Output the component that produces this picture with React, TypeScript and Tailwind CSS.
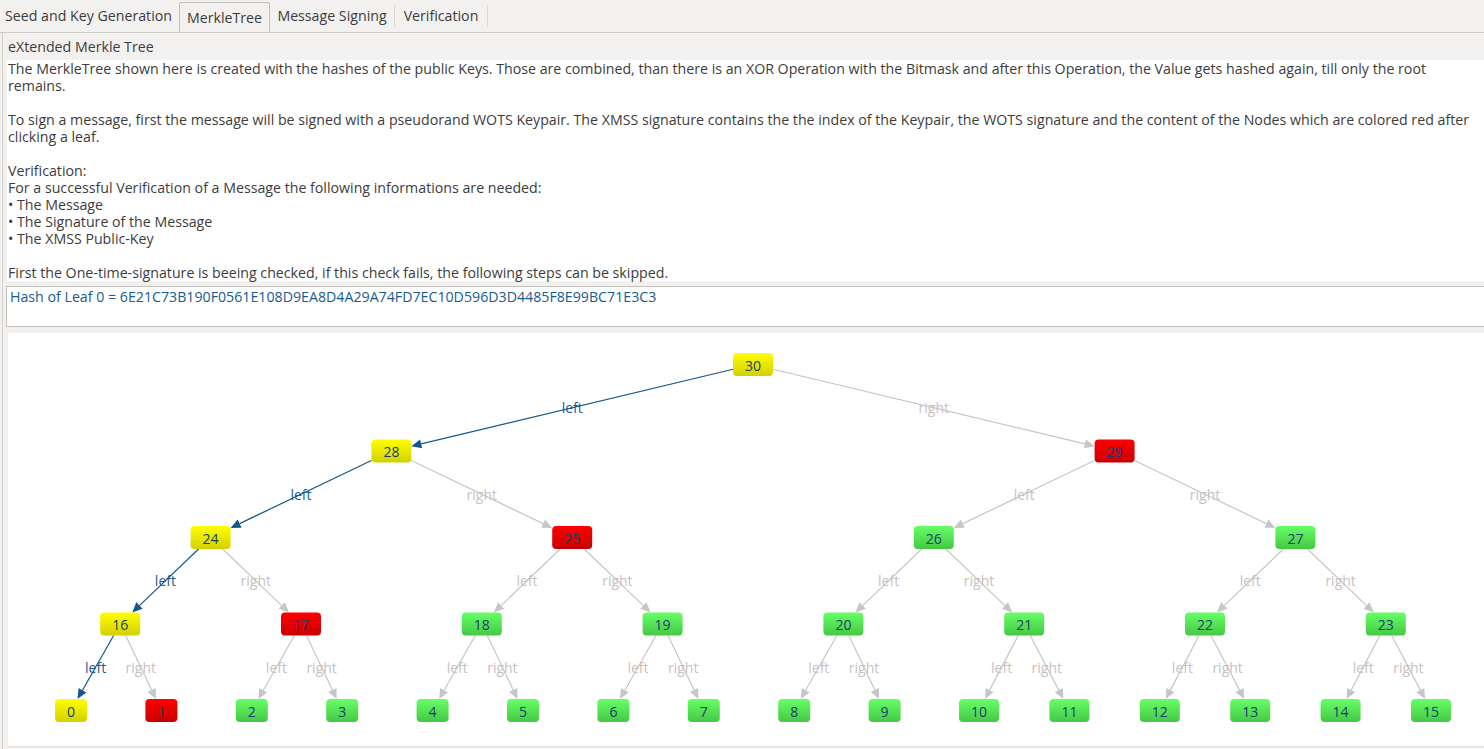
import React from "react";

const FONT = '"Open Sans", "Noto Sans", sans-serif';

type Col = "y" | "r" | "g";
type Node = { id: number; left: number; top: number; w: number; h: number; color: Col };

const S = 90.4;
const TOPS = [353, 439.5, 526, 612.5, 699];
const H = 23;

const yellow = new Set([30, 28, 24, 16, 0]);
const red = new Set([29, 25, 17, 1]);
const colorOf = (id: number): Col => (yellow.has(id) ? "y" : red.has(id) ? "r" : "g");

const levels: number[][] = [[30], [28, 29], [24, 25, 26, 27], [16, 17, 18, 19, 20, 21, 22, 23], Array.from({ length: 16 }, (_, i) => i)];

const nodes: Record<number, Node> = {};
levels.forEach((ids, L) => {
  const span = Math.pow(2, 4 - L);
  ids.forEach((id, j) => {
    const left = 55 + S * (span * j + (span - 1) / 2);
    const w = L === 4 && id < 10 ? 32 : 40;
    nodes[id] = { id, left, top: TOPS[L], w, h: H, color: colorOf(id) };
  });
});

const highlighted = new Set(["30-28", "28-24", "24-16", "16-0"]);

type Edge = { p: number; c: number; label: string };
const edges: Edge[] = [];
for (let L = 0; L < 4; L++) {
  levels[L].forEach((pid, j) => {
    edges.push({ p: pid, c: levels[L + 1][2 * j], label: "left" });
    edges.push({ p: pid, c: levels[L + 1][2 * j + 1], label: "right" });
  });
}

const center = (n: Node) => ({ x: n.left + n.w / 2, y: n.top + n.h / 2 });
const clip = (cx: number, cy: number, hw: number, hh: number, dx: number, dy: number) => {
  const tx = dx === 0 ? Infinity : hw / Math.abs(dx);
  const ty = dy === 0 ? Infinity : hh / Math.abs(dy);
  const t = Math.min(tx, ty);
  return { x: cx + dx * t, y: cy + dy * t };
};

const grads: Record<Col, [string, string]> = {
  y: ["#ffff00", "#d2d000"],
  r: ["#ff0000", "#c80000"],
  g: ["#66ff66", "#45c845"],
};

function Tree() {
  return (
    <svg width={1476} height={413} viewBox="8 333 1476 413" className="block">
      <defs>
        {(Object.keys(grads) as Col[]).map((k) => (
          <linearGradient key={k} id={`g-${k}`} x1="0" y1="0" x2="0" y2="1">
            <stop offset="0" stopColor={grads[k][0]} />
            <stop offset="1" stopColor={grads[k][1]} />
          </linearGradient>
        ))}
      </defs>
      {edges.map((e) => {
        const pn = nodes[e.p];
        const cn = nodes[e.c];
        const pc = center(pn);
        const cc = center(cn);
        const dx = cc.x - pc.x;
        const dy = cc.y - pc.y;
        const a = clip(pc.x, pc.y, pn.w / 2, pn.h / 2, dx, dy);
        const b = clip(cc.x, cc.y, cn.w / 2, cn.h / 2, -dx, -dy);
        const len = Math.hypot(dx, dy);
        const ux = dx / len;
        const uy = dy / len;
        const bx = b.x - ux * 10;
        const by = b.y - uy * 10;
        const px = -uy;
        const py = ux;
        const hi = highlighted.has(`${e.p}-${e.c}`);
        const col = hi ? "#17568a" : "#c6c6c6";
        const lab = hi ? "#1c5b8e" : "#c9bfbf";
        return (
          <g key={`${e.p}-${e.c}`}>
            <line x1={a.x} y1={a.y} x2={bx} y2={by} stroke={col} strokeWidth={1.2} />
            <polygon
              points={`${b.x},${b.y} ${bx + px * 4.5},${by + py * 4.5} ${bx - px * 4.5},${by - py * 4.5}`}
              fill={col}
            />
            <text
              x={(pc.x + cc.x) / 2}
              y={(pc.y + cc.y) / 2}
              textAnchor="middle"
              dominantBaseline="central"
              fontFamily={FONT}
              fontSize={14}
              fill={lab}
            >
              {e.label}
            </text>
          </g>
        );
      })}
      {Object.values(nodes).map((n) => (
        <g key={n.id}>
          <rect x={n.left} y={n.top} width={n.w} height={n.h} rx={4} fill={`url(#g-${n.color})`} />
          <text
            x={n.left + n.w / 2}
            y={n.top + n.h / 2 + 0.5}
            textAnchor="middle"
            dominantBaseline="central"
            fontFamily={FONT}
            fontSize={14}
            fill="#1b3c70"
          >
            {n.id}
          </text>
        </g>
      ))}
    </svg>
  );
}

const lines = [
  "The MerkleTree shown here is created with the hashes of the public Keys. Those are combined, than there is an XOR Operation with the Bitmask and after this Operation, the Value gets hashed again, till only the root",
  "remains.",
  "",
  "To sign a message, first the message will be signed with a pseudorand WOTS Keypair. The XMSS signature contains the the index of the Keypair, the WOTS signature and the content of the Nodes which are colored red after",
  "clicking a leaf.",
  "",
  "Verification:",
  "For a successful Verification of a Message the following informations are needed:",
  "\u2022 The Message",
  "\u2022 The Signature of the Message",
  "\u2022 The XMSS Public-Key",
  "",
  "First the One-time-signature is beeing checked, if this check fails, the following steps can be skipped.",
];

export default function App() {
  return (
    <div
      className="w-[1484px] h-[749px] bg-[#f2f1f0] text-[#3c3c3c] overflow-hidden flex flex-col text-[14.2px]"
      style={{ fontFamily: FONT }}
    >
      <div className="h-[33px] flex border-b border-[#cdc9c4] shrink-0">
        <div className="w-[179px] flex items-center pl-[5px] whitespace-nowrap">Seed and Key Generation</div>
        <div className="w-[91px] mt-[2px] flex items-center justify-center border border-b-0 border-[#c4c0bb] rounded-t-[3px] whitespace-nowrap">
          MerkleTree
        </div>
        <div className="w-[125px] flex items-center justify-center whitespace-nowrap">
          <span className="flex-1 text-center">Message Signing</span>
          <span className="w-px h-[22px] bg-[#dcd8d3]" />
        </div>
        <div className="w-[93px] flex items-center justify-center whitespace-nowrap">
          <span className="flex-1 text-center">Verification</span>
          <span className="w-px h-[22px] bg-[#dcd8d3]" />
        </div>
      </div>
      <div className="ml-[2px] border-l border-[#d3cfca] flex-1 flex flex-col pl-[4px]">
        <div className="h-[27px] flex items-center pl-[1px] whitespace-nowrap">eXtended Merkle Tree</div>
        <div className="bg-white h-[221px] pl-[1px] leading-[17px]">
          {lines.map((l, i) => (
            <div key={i} className="h-[17px] whitespace-nowrap">
              {l}
            </div>
          ))}
        </div>
        <div className="mt-[5px] h-[41px] bg-white border border-[#c4c0bc] -ml-[1px] -mr-[6px] pl-[3px] pt-[1px] leading-[17px] text-[#175b8f] whitespace-nowrap text-[14.2px]">
          Hash of Leaf 0 = 6E21C73B190F0561E108D9EA8D4A29A74FD7EC10D596D3D4485F8E99BC71E3C3
        </div>
        <div className="mt-[6px] h-[413px] bg-white ml-[1px] border-b border-[#e2dfdb] box-content">
          <Tree />
        </div>
      </div>
    </div>
  );
}
